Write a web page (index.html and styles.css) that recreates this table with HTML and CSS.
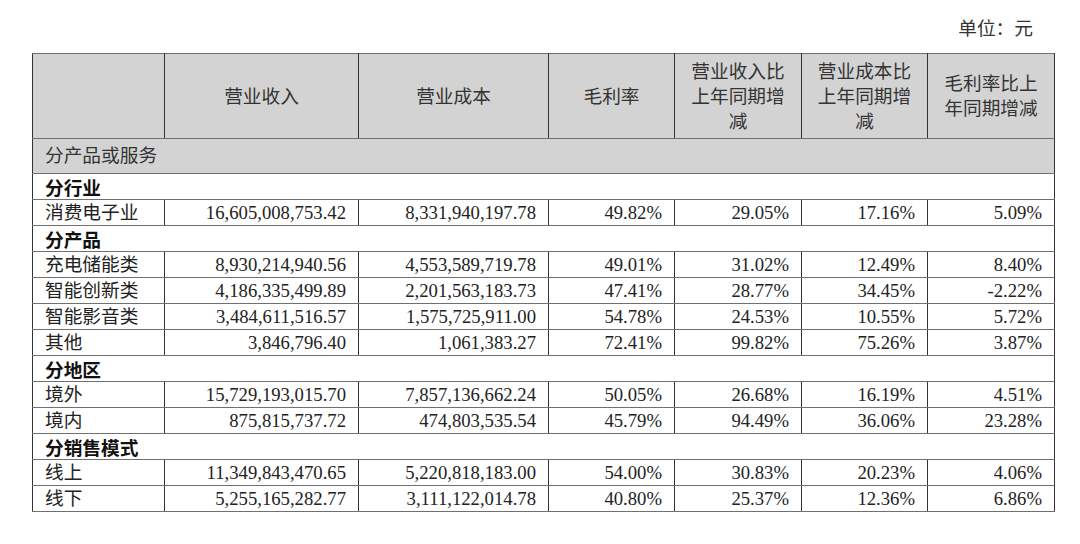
FILE: index.html
```html
<!DOCTYPE html>
<html lang="zh-CN">
<head>
<meta charset="utf-8">
<link rel="stylesheet" href="styles.css">
</head>
<body>
<div class="page">
  <div class="unit">单位：元</div>
  <table class="fin">
    <colgroup>
      <col class="c1"><col class="c2"><col class="c3"><col class="c4"><col class="c5"><col class="c6"><col class="c7">
    </colgroup>
    <thead>
      <tr class="head">
        <th></th>
        <th>营业收入</th>
        <th>营业成本</th>
        <th>毛利率</th>
        <th>营业收入比上年同期增减</th>
        <th>营业成本比上年同期增减</th>
        <th>毛利率比上年同期增减</th>
      </tr>
    </thead>
    <tbody>
      <tr class="group"><td colspan="7">分产品或服务</td></tr>
      <tr class="sect"><td colspan="7">分行业</td></tr>
      <tr><td>消费电子业</td><td>16,605,008,753.42</td><td>8,331,940,197.78</td><td>49.82%</td><td>29.05%</td><td>17.16%</td><td>5.09%</td></tr>
      <tr class="sect"><td colspan="7">分产品</td></tr>
      <tr><td>充电储能类</td><td>8,930,214,940.56</td><td>4,553,589,719.78</td><td>49.01%</td><td>31.02%</td><td>12.49%</td><td>8.40%</td></tr>
      <tr><td>智能创新类</td><td>4,186,335,499.89</td><td>2,201,563,183.73</td><td>47.41%</td><td>28.77%</td><td>34.45%</td><td>-2.22%</td></tr>
      <tr><td>智能影音类</td><td>3,484,611,516.57</td><td>1,575,725,911.00</td><td>54.78%</td><td>24.53%</td><td>10.55%</td><td>5.72%</td></tr>
      <tr><td>其他</td><td>3,846,796.40</td><td>1,061,383.27</td><td>72.41%</td><td>99.82%</td><td>75.26%</td><td>3.87%</td></tr>
      <tr class="sect"><td colspan="7">分地区</td></tr>
      <tr><td>境外</td><td>15,729,193,015.70</td><td>7,857,136,662.24</td><td>50.05%</td><td>26.68%</td><td>16.19%</td><td>4.51%</td></tr>
      <tr><td>境内</td><td>875,815,737.72</td><td>474,803,535.54</td><td>45.79%</td><td>94.49%</td><td>36.06%</td><td>23.28%</td></tr>
      <tr class="sect"><td colspan="7">分销售模式</td></tr>
      <tr><td>线上</td><td>11,349,843,470.65</td><td>5,220,818,183.00</td><td>54.00%</td><td>30.83%</td><td>20.23%</td><td>4.06%</td></tr>
      <tr><td>线下</td><td>5,255,165,282.77</td><td>3,111,122,014.78</td><td>40.80%</td><td>25.37%</td><td>12.36%</td><td>6.86%</td></tr>
    </tbody>
  </table>
</div>
</body>
</html>
```
FILE: styles.css
```css
html, body {
  margin: 0;
  padding: 0;
  background: #ffffff;
}
body {
  font-family: "Liberation Serif", "Noto Sans CJK SC", serif;
  font-size: 18.7px;
  color: #222;
}
.page {
  padding: 16px 0 0 32px;
  width: 1022px;
}
.unit {
  text-align: right;
  padding-right: 21px;
  height: 25px;
  line-height: 25px;
  margin-bottom: 12px;
  color: #333;
}
.fin {
  border-collapse: collapse;
  table-layout: fixed;
  width: 1022px;
}
.c1 { width: 132px; }
.c2 { width: 194px; }
.c3 { width: 190px; }
.c4 { width: 126px; }
.c5 { width: 127px; }
.c6 { width: 126px; }
.c7 { width: 127px; }
.fin th, .fin td {
  border-top: 1px solid #707070;
  border-bottom: 1px solid #707070;
  border-left: 1px solid #333;
  border-right: 1px solid #333;
  padding: 0 12px;
  white-space: nowrap;
  line-height: 24px;
  height: 25px;
  text-align: right;
}
.fin td:first-child {
  text-align: left;
}
.head th {
  background: #d3d3d3;
  font-weight: normal;
  color: #333;
  text-align: center;
  white-space: normal;
  height: 84px;
  line-height: 25px;
  padding: 0 12px;
}
.group td {
  background: #d3d3d3;
  height: 34px;
  color: #333;
}
.sect td {
  font-weight: bold;
  color: #111;
  font-family: "Noto Sans CJK SC", sans-serif;
}
```
